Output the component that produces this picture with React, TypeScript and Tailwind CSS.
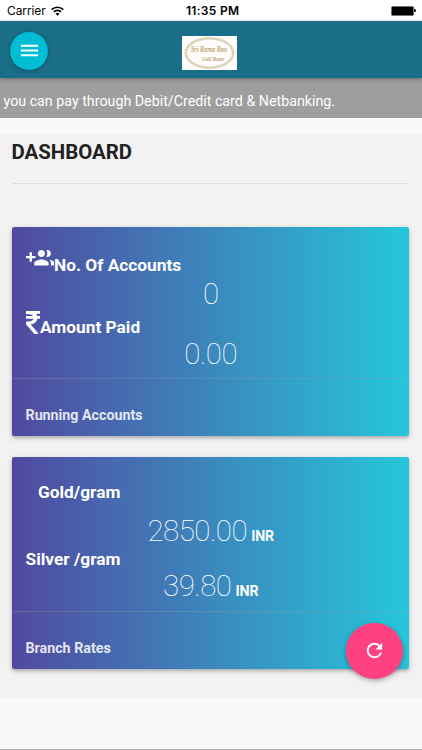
import type { ReactNode } from "react";
import { MdMenu, MdRefresh } from "react-icons/md";

function StatusBar() {
  return (
    <div className="relative flex h-[21px] items-center justify-between bg-white pl-[7px] pr-[6px] text-black">
      <div className="flex items-center gap-[5px]">
        <span className="font-[Inter] text-[12px] leading-[21px] tracking-[-0.1px]">Carrier</span>
        <svg width="13" height="10" viewBox="0 0 13 10" fill="none" stroke="currentColor" strokeWidth="1.7">
          <path d="M.7 3.6a8.3 8.3 0 0 1 11.6 0" />
          <path d="M2.9 5.9a5.1 5.1 0 0 1 7.2 0" />
          <path d="M6.5 9.8 4.5 7.7a2.9 2.9 0 0 1 4 0z" fill="currentColor" stroke="none" />
        </svg>
      </div>
      <span className="absolute left-[186px] font-[Inter] text-[12px] font-semibold leading-[21px] tracking-[0.3px]">11:35 PM</span>
      <div className="flex items-center">
        <div className="h-[10px] w-[23px] rounded-[1.5px] border border-neutral-500 bg-black" />
        <div className="h-[3px] w-[2px] rounded-r-full bg-black" />
      </div>
    </div>
  );
}

function Logo() {
  return (
    <svg width="55" height="34" viewBox="0 0 55 34" className="bg-[#fefdfb]">
      <ellipse cx="27.5" cy="17" rx="23.7" ry="14.6" fill="none" stroke="#e6dcc8" strokeWidth="2.8" />
      <ellipse cx="27.5" cy="17" rx="23.7" ry="14.6" fill="none" stroke="#cbb68e" strokeWidth="1.8" strokeDasharray="1 1" opacity="0.5" />
      <g fill="#c4a474" stroke="#c4a474" strokeWidth="0.2" fontFamily="Liberation Serif, serif" fontStyle="italic">
        <text x="9" y="16" fontSize="7.5" textLength="36" lengthAdjust="spacingAndGlyphs">Sri Rama Rao</text>
        <text x="20" y="25" fontSize="6.5" textLength="22" lengthAdjust="spacingAndGlyphs">Gold Bazar</text>
      </g>
    </svg>
  );
}

function GroupAddIcon() {
  return (
    <svg width="28.5" height="28.5" viewBox="0 0 24 24" fill="currentColor" className="shrink-0">
      <path d="M8 10H5V7H3v3H0v2h3v3h2v-3h3v-2zm10 1c1.66 0 2.99-1.34 2.99-3S19.66 5 18 5c-.32 0-.63.05-.91.14.57.81.9 1.79.9 2.86s-.34 2.04-.9 2.86c.28.09.59.14.91.14zm-5 0c1.66 0 2.99-1.34 2.99-3S14.66 5 13 5c-1.66 0-3 1.34-3 3s1.34 3 3 3zm6.62 2.16c.83.73 1.38 1.66 1.38 2.84v2h3v-2c0-1.54-2.37-2.49-4.38-2.84zM13 13c-2 0-6 1-6 3v2h12v-2c0-2-4-3-6-3z" />
    </svg>
  );
}

function RupeeIcon() {
  return (
    <svg width="14.5" height="23" viewBox="0 128 898 1408" preserveAspectRatio="none" fill="currentColor" className="-mt-[1.5px] shrink-0">
      <path d="M898 470v102q0 14-9 23t-23 9h-168q-23 144-129 234t-276 110q167 178 459 536 14 16 4 34-8 18-29 18h-195q-16 0-25-12-306-367-498-571-9-9-9-22v-127q0-13 9.5-22.5t22.5-9.5h112q132 0 212.5-43t102.5-125h-427q-14 0-23-9t-9-23v-102q0-14 9-23t23-9h413q-57-113-268-113h-145q-13 0-22.5-9.5t-9.5-22.5v-133q0-14 9-23t23-9h832q14 0 23 9t9 23v102q0 14-9 23t-23 9h-233q47 61 64 144h171q14 0 23 9t9 23z" />
    </svg>
  );
}

function Card({ footer, children }: { footer: string; children: ReactNode }) {
  return (
    <section className="rounded-[2px] bg-linear-to-r/srgb from-[#5149a0] to-[#26c6da] text-white shadow-[0_2px_3px_rgba(0,0,0,0.18),0_2px_6px_rgba(0,0,0,0.14)]">
      {children}
      <div className="h-[57.5px] border-t border-[#a0a0a0]/30 pl-[14px] pt-[24.5px] text-[14.25px] font-bold leading-[22px] text-white/85">
        {footer}
      </div>
    </section>
  );
}

function Value({ amount, unit }: { amount: string; unit?: string }) {
  return (
    <div className="pl-[1px] text-center text-[29.5px] font-thin leading-[36px] tracking-[-0.5px]">
      {amount}
      {unit && <span className="ml-[4px] text-[14.2px] font-bold tracking-[-0.1px]">{unit}</span>}
    </div>
  );
}

export default function App() {
  return (
    <div className="flex h-[750px] w-[422px] flex-col overflow-hidden border-b border-[#b5b5b5] bg-[#f9f9f9] font-[Roboto,sans-serif]">
      <StatusBar />

      <header className="relative z-10 flex h-[57px] shrink-0 items-center bg-[#1b6e88] pl-[10px] shadow-[0_1px_4px_rgba(0,0,0,0.35)]">
        <button className="mt-[2px] flex size-[38px] items-center justify-center rounded-full bg-[#00bcd4] text-white shadow-[0_1px_4px_rgba(0,0,0,0.3)]">
          <MdMenu size={23} />
        </button>
        <div className="ml-[133.5px] mt-[6px]">
          <Logo />
        </div>
      </header>

      <div className="h-[40px] shrink-0 whitespace-nowrap bg-[#9e9e9e] pl-[3.5px] pt-[12px] text-[14.25px] leading-[22px] text-white">
        you can pay through Debit/Credit card &amp; Netbanking.
      </div>

      <main className="mt-[16.5px] h-[562.5px] shrink-0 bg-[#f2f2f2] pl-[11.5px] pr-[13px]">
        <h1 className="pt-[4.5px] text-[20.4px] font-bold leading-[26px] text-[#212121]">DASHBOARD</h1>
        <hr className="mb-[43px] mt-[18px] border-[#dedede]" />

        <Card footer="Running Accounts">
          <div className="h-[151px] pt-[17px]">
            <div className="flex h-[32px] pl-[14px]">
              <GroupAddIcon />
              <span className="pt-[8px] text-[17.3px] font-bold leading-[26px]">No. Of Accounts</span>
            </div>
            <Value amount="0" />
            <div className="flex h-[24px] items-start pl-[14px]">
              <RupeeIcon />
              <span className="pt-[2px] text-[17.3px] font-bold leading-[26px]">Amount Paid</span>
            </div>
            <Value amount="0.00" />
          </div>
        </Card>

        <div className="mt-[21.5px]">
          <Card footer="Branch Rates">
            <div className="h-[154px] pt-[21.5px]">
              <div className="h-[34px] pl-[26.5px] text-[17.3px] font-bold leading-[26px]">Gold/gram</div>
              <Value amount="2850.00" unit="INR" />
              <div className="-mt-[5px] h-[19px] pl-[14px] text-[17.3px] font-bold leading-[20px]">Silver /gram</div>
              <Value amount="39.80" unit="INR" />
            </div>
          </Card>
        </div>
      </main>

      <button className="absolute left-[346px] top-[622.5px] flex size-[56.5px] items-center justify-center rounded-full bg-[#ff4081] text-white shadow-[0_2px_5px_rgba(0,0,0,0.3)]">
        <MdRefresh size={23} />
      </button>
    </div>
  );
}
